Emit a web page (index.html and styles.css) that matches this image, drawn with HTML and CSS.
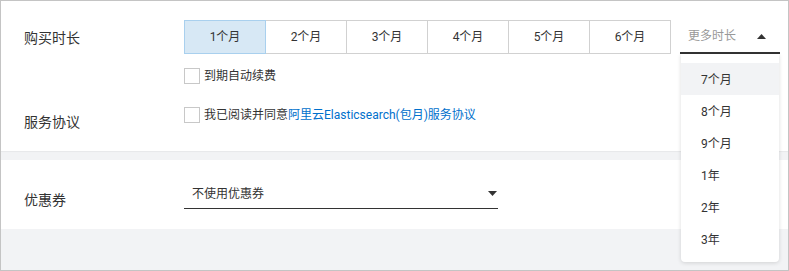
FILE: index.html
```html
<!DOCTYPE html>
<html lang="zh-CN">
<head>
<meta charset="utf-8">
<title>购买</title>
<link rel="stylesheet" href="styles.css">
</head>
<body>
<div class="frame">
  <div class="panel panel-top">
    <div class="row row-duration">
      <div class="label label-duration">购买时长</div>
      <div class="field">
        <div class="seg-line">
          <div class="seg">
            <div class="seg-btn active">1个月</div>
            <div class="seg-btn">2个月</div>
            <div class="seg-btn">3个月</div>
            <div class="seg-btn">4个月</div>
            <div class="seg-btn">5个月</div>
            <div class="seg-btn">6个月</div>
          </div>
          <div class="more">
            <span class="more-text">更多时长</span>
            <svg class="caret" width="9" height="5" viewBox="0 0 9 5"><path d="M0 5 L4.5 0 L9 5 Z" fill="#333"/></svg>
            <div class="menu">
              <div class="menu-item hover">7个月</div>
              <div class="menu-item">8个月</div>
              <div class="menu-item">9个月</div>
              <div class="menu-item">1年</div>
              <div class="menu-item">2年</div>
              <div class="menu-item">3年</div>
            </div>
          </div>
        </div>
        <div class="check check-renew"><span class="box"></span><span class="check-text">到期自动续费</span></div>
      </div>
    </div>
    <div class="row row-agree">
      <div class="label label-agree">服务协议</div>
      <div class="check"><span class="box"></span><span class="check-text">我已阅读并同意<a class="link" href="#">阿里云Elasticsearch(包月)服务协议</a></span></div>
    </div>
  </div>
  <div class="gap"></div>
  <div class="panel panel-coupon">
    <div class="row">
      <div class="label label-coupon">优惠券</div>
      <div class="select">
        <span class="select-text">不使用优惠券</span>
        <svg class="caret" width="9" height="5" viewBox="0 0 9 5"><path d="M0 0 L9 0 L4.5 5 Z" fill="#333"/></svg>
      </div>
    </div>
  </div>
</div>
</body>
</html>
```

FILE: styles.css
```css
* { box-sizing: border-box; }
html, body { margin: 0; padding: 0; background: #fff; }
body {
  font-family: Roboto, "Noto Sans CJK SC", sans-serif;
  color: #333;
}
.frame {
  width: 789px;
  height: 271px;
  border: 1px solid #c4c4c4;
  background: #f2f3f5;
  overflow: hidden;
}
.panel {
  background: #fff;
  padding-left: 23px;
}
.panel-top {
  height: 150px;
  padding-top: 19px;
  box-shadow: 0 1px 1px rgba(0,0,0,0.04);
  position: relative;
  z-index: 1;
}
.gap { height: 9px; }
.panel-coupon {
  height: 69px;
  padding-top: 19px;
}
.row {
  display: flex;
  align-items: flex-start;
}
.label {
  width: 160px;
  flex: none;
  font-size: 14px;
  line-height: 20px;
  color: #333;
}
.label-duration { margin-top: 8px; }
.label-agree { margin-top: 5px; }
.label-coupon { margin-top: 11px; }
.field { display: flex; flex-direction: column; }
.seg-line { display: flex; align-items: flex-start; }
.seg { display: flex; }
.seg-btn {
  width: 82px;
  height: 34px;
  border: 1px solid #d1d1d1;
  margin-left: -1px;
  font-size: 12px;
  line-height: 32px;
  text-align: center;
  color: #333;
  background: #fff;
}
.seg-btn:first-child { margin-left: 0; }
.seg-btn.active {
  background: #d7e8f5;
  border-color: #a9d0ee;
  position: relative;
  z-index: 1;
}
.more {
  position: relative;
  width: 100px;
  height: 34px;
  margin-left: 9px;
  border-bottom: 2px solid #333;
  display: flex;
  align-items: center;
  justify-content: space-between;
  padding: 0 14px 0 8px;
}
.more-text {
  font-size: 12px;
  color: #999;
  line-height: 20px;
}
.caret { display: block; flex: none; }
.menu {
  position: absolute;
  left: 1px;
  top: 34px;
  width: 98px;
  padding: 9px 0 7px;
  background: #fff;
  border-radius: 0 0 4px 4px;
  box-shadow: 0 1px 4px rgba(0,0,0,0.14);
  z-index: 5;
}
.menu-item {
  height: 32px;
  line-height: 30px;
  padding: 2px 0 0 20px;
  font-size: 12px;
  color: #333;
}
.menu-item.hover { background: #f2f3f5; }
.check {
  display: flex;
  align-items: center;
  height: 16px;
}
.check-renew { margin-top: 14px; }
.row-agree { margin-top: 23px; }
.box {
  width: 16px;
  height: 16px;
  border: 1px solid #c8c8c8;
  background: #fff;
  flex: none;
}
.check-text {
  margin-left: 4px;
  font-size: 12px;
  line-height: 16px;
  color: #333;
  white-space: nowrap;
}
.link { color: #0070cc; text-decoration: none; }
.select {
  width: 314px;
  height: 30px;
  border-bottom: 1px solid #333;
  display: flex;
  align-items: center;
  justify-content: space-between;
  padding: 0 1px 0 8px;
}
.select-text { font-size: 12px; line-height: 20px; color: #333; }
```
